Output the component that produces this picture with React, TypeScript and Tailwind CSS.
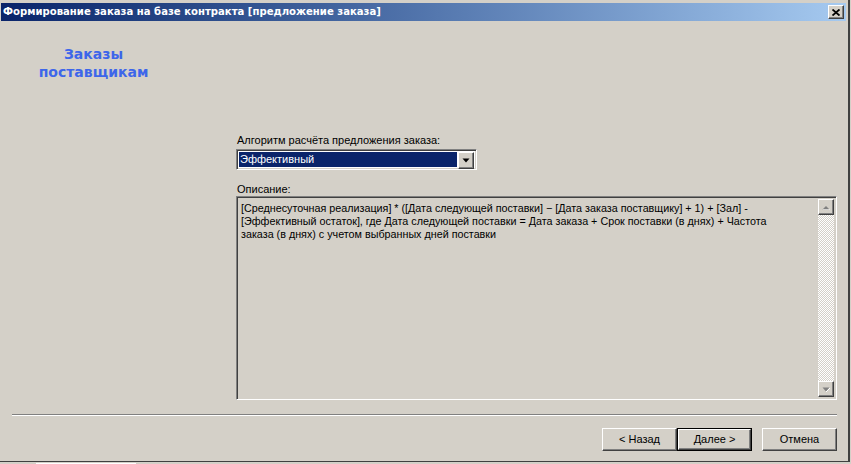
import type { ReactNode } from "react";

const raised =
  "border border-t-white border-l-white border-r-[#404040] border-b-[#404040] shadow-[inset_-1px_-1px_0_#808080,inset_1px_1px_0_#d4d0c8]";
const sunken =
  "border border-t-[#808080] border-l-[#808080] border-r-white border-b-white shadow-[inset_1px_1px_0_#404040,inset_-1px_-1px_0_#d4d0c8]";

const sans = "font-['Liberation_Sans',Arial,sans-serif]";

function Arrow({ dir, muted }: { dir: "up" | "down"; muted?: boolean }) {
  const fill = muted ? "#808080" : "#000";
  if (dir === "up") {
    return (
      <svg width="8" height="5" viewBox="0 0 8 5">
        <polygon points="0.5,4.5 4,1 7.5,4.5" fill={fill} />
        {muted ? <line x1="1" y1="5" x2="8" y2="5" stroke="#fff" /> : null}
      </svg>
    );
  }
  return (
    <svg width="8" height="5" viewBox="0 0 8 5">
      <polygon points="0.5,0.5 7.5,0.5 4,4.5" fill={fill} />
      {muted ? <line x1="4" y1="5" x2="8" y2="1" stroke="#fff" /> : null}
    </svg>
  );
}

function Button({ children, isDefault }: { children: ReactNode; isDefault?: boolean }) {
  const face = (
    <div className={`flex h-full w-full items-center justify-center bg-[#d4d0c8] text-[11px] text-black ${raised}`}>
      {children}
    </div>
  );
  if (isDefault) {
    return <div className="h-[23px] w-[75px] border border-black">{face}</div>;
  }
  return <div className="h-[23px] w-[75px]">{face}</div>;
}

function ScrollBar() {
  return (
    <div className="flex h-full w-[16px] flex-col">
      <div className={`flex h-[16px] w-[16px] items-center justify-center bg-[#d4d0c8] ${raised}`}>
        <Arrow dir="up" muted />
      </div>
      <div className="flex-1 bg-[repeating-conic-gradient(#ffffff_0_25%,#d4d0c8_0_50%)] bg-[length:2px_2px]" />
      <div className={`flex h-[16px] w-[16px] items-center justify-center bg-[#d4d0c8] ${raised}`}>
        <Arrow dir="down" muted />
      </div>
    </div>
  );
}

export default function App() {
  return (
    <div className={`relative h-[464px] w-[851px] overflow-hidden bg-[#d4d0c8] ${sans}`}>
      <div className="flex h-[462px] w-[850px] flex-col border-r-2 border-b border-r-[#404040] border-b-[#404040] pt-[3px] pl-[1px] pr-[2px]">
        {/* caption */}
        <div className="flex h-[18px] items-center justify-between bg-gradient-to-r from-[#0a246a] to-[#a6caf0] pl-[2px] pr-[2px]">
          <span className="font-['DejaVu_Sans',Verdana,sans-serif] text-[10.1px] font-bold whitespace-nowrap text-white">
            Формирование заказа на базе контракта [предложение заказа]
          </span>
          <div className={`flex h-[14px] w-[16px] items-center justify-center bg-[#d4d0c8] ${raised}`}>
            <svg width="8" height="7" viewBox="0 0 8 7">
              <path d="M0.5 0.5 L7.5 6.5 M7.5 0.5 L0.5 6.5" stroke="#000" strokeWidth="1.8" />
            </svg>
          </div>
        </div>

        {/* wizard body */}
        <div className="flex flex-1">
          <div className="w-[185px] pt-[24px] text-center font-['DejaVu_Sans',Verdana,sans-serif] text-[14px] leading-[18px] font-bold text-[#3d66ea]">
            Заказы
            <br />
            поставщикам
          </div>
          <div className="ml-[50px] flex flex-col pt-[113px]">
            <div className="pl-[1px] text-[11px] leading-[13px] text-black">Алгоритм расчёта предложения заказа:</div>
            <div className={`mt-[2px] flex h-[21px] w-[241px] bg-white ${sunken} p-[2px]`}>
              <div className="flex flex-1 items-center bg-[#0a246a] pl-[1px] text-[11px] text-white">Эффективный</div>
              <div className={`ml-[1px] flex h-[17px] w-[16px] items-center justify-center bg-[#d4d0c8] ${raised}`}>
                <Arrow dir="down" />
              </div>
            </div>
            <div className="mt-[13px] pl-[1px] text-[11px] leading-[13px] text-black">Описание:</div>
            <div className={`flex h-[204px] w-[601px] ${sunken} p-[2px]`}>
              <div className="flex-1 pt-[3px] pl-[2px] text-[10.75px] leading-[13px] text-black">
                [Среднесуточная реализация] * ([Дата следующей поставки] − [Дата заказа поставщику] + 1) + [Зал] -
                <br />
                [Эффективный остаток], где Дата следующей поставки = Дата заказа + Срок поставки (в днях) + Частота
                <br />
                заказа (в днях) с учетом выбранных дней поставки
              </div>
              <ScrollBar />
            </div>
          </div>
        </div>

        {/* separator and buttons */}
        <div className="ml-[11px] mr-[9px] border-t border-b border-t-[#808080] border-b-white" />
        <div className="flex justify-end gap-[10px] pt-[12px] pr-[9px] pb-[10px]">
          <div className="flex">
            <Button>&lt; Назад</Button>
            <Button isDefault>Далее &gt;</Button>
          </div>
          <Button>Отмена</Button>
        </div>
      </div>
      <div className="absolute bottom-0 left-[36px] h-[1px] w-[100px] bg-white" />
    </div>
  );
}
